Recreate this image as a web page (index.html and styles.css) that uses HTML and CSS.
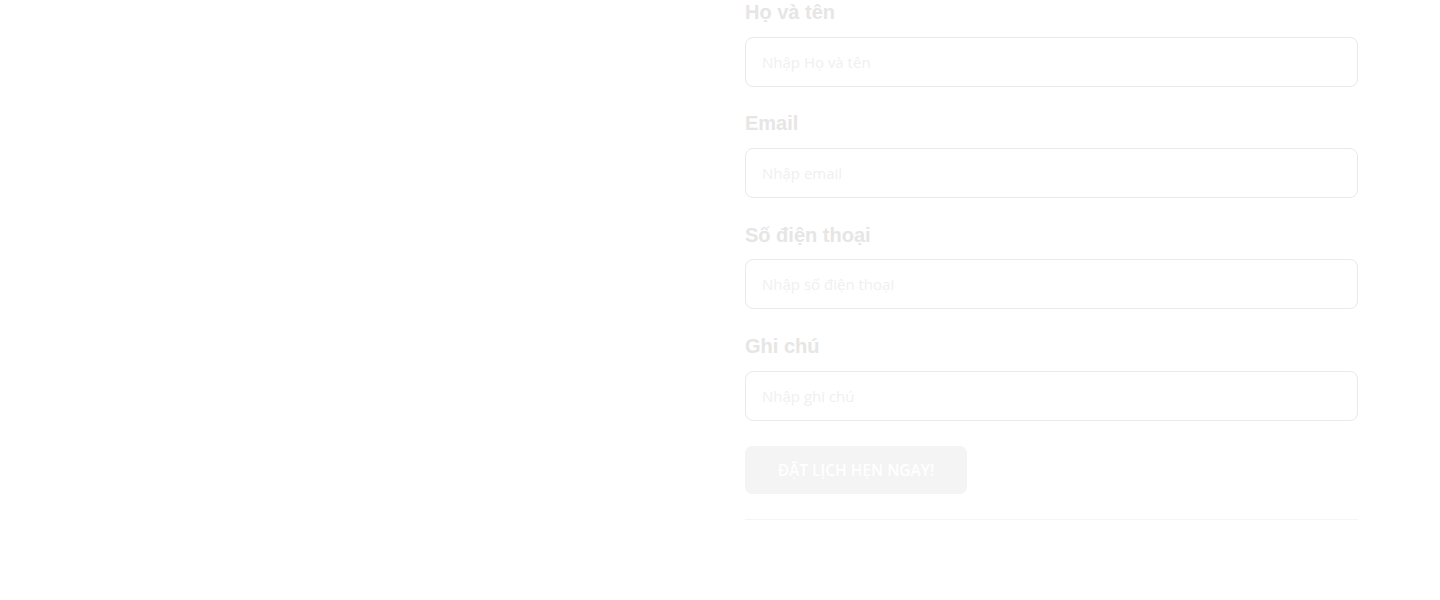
FILE: index.html
```html
<!DOCTYPE html>
<html lang="vi">
<head>
<meta charset="utf-8">
<title>Đặt lịch hẹn</title>
<link rel="stylesheet" href="styles.css">
</head>
<body>
<main class="page">
  <div class="left"></div>
  <form class="form">
    <div class="group">
      <label class="label">Họ và tên</label>
      <input class="input" type="text" placeholder="Nhập Họ và tên">
    </div>
    <div class="group">
      <label class="label">Email</label>
      <input class="input" type="text" placeholder="Nhập email">
    </div>
    <div class="group">
      <label class="label">Số điện thoại</label>
      <input class="input" type="text" placeholder="Nhập số điện thoại">
    </div>
    <div class="group">
      <label class="label">Ghi chú</label>
      <input class="input" type="text" placeholder="Nhập ghi chú">
    </div>
    <button class="btn" type="button">ĐẶT LỊCH HẸN NGAY!</button>
    <div class="rule"></div>
  </form>
</main>
</body>
</html>
```

FILE: styles.css
```css
html, body {
  margin: 0;
  padding: 0;
  background: #ffffff;
}
.page {
  display: flex;
  width: 1440px;
  height: 600px;
}
.left {
  width: 745px;
  flex: none;
}
.form {
  width: 613px;
  display: flex;
  flex-direction: column;
}
.group {
  display: flex;
  flex-direction: column;
  margin-bottom: 24.67px;
}
.label {
  font-family: "Liberation Sans", Arial, sans-serif;
  font-weight: 700;
  font-size: 20px;
  line-height: 24px;
  color: #e6e6e6;
  margin-bottom: 12.67px;
}
.input {
  box-sizing: border-box;
  height: 50px;
  width: 613px;
  border: 1px solid #e9e9e9;
  border-radius: 8px;
  padding: 0 16px;
  font-family: "Open Sans", sans-serif;
  font-size: 15px;
  color: #999;
  background: #fff;
  outline: none;
}
.input::placeholder {
  color: #f0f0f0;
}
.btn {
  align-self: flex-start;
  margin-top: 1px;
  height: 48px;
  width: 222px;
  border: none;
  border-radius: 7px;
  background: #f4f4f4;
  color: #ffffff;
  font-family: "Open Sans", sans-serif;
  font-weight: 600;
  font-size: 15.5px;
  padding: 0;
}
.rule {
  margin-top: 25px;
  height: 1px;
  background: #f5f5f5;
}
```
